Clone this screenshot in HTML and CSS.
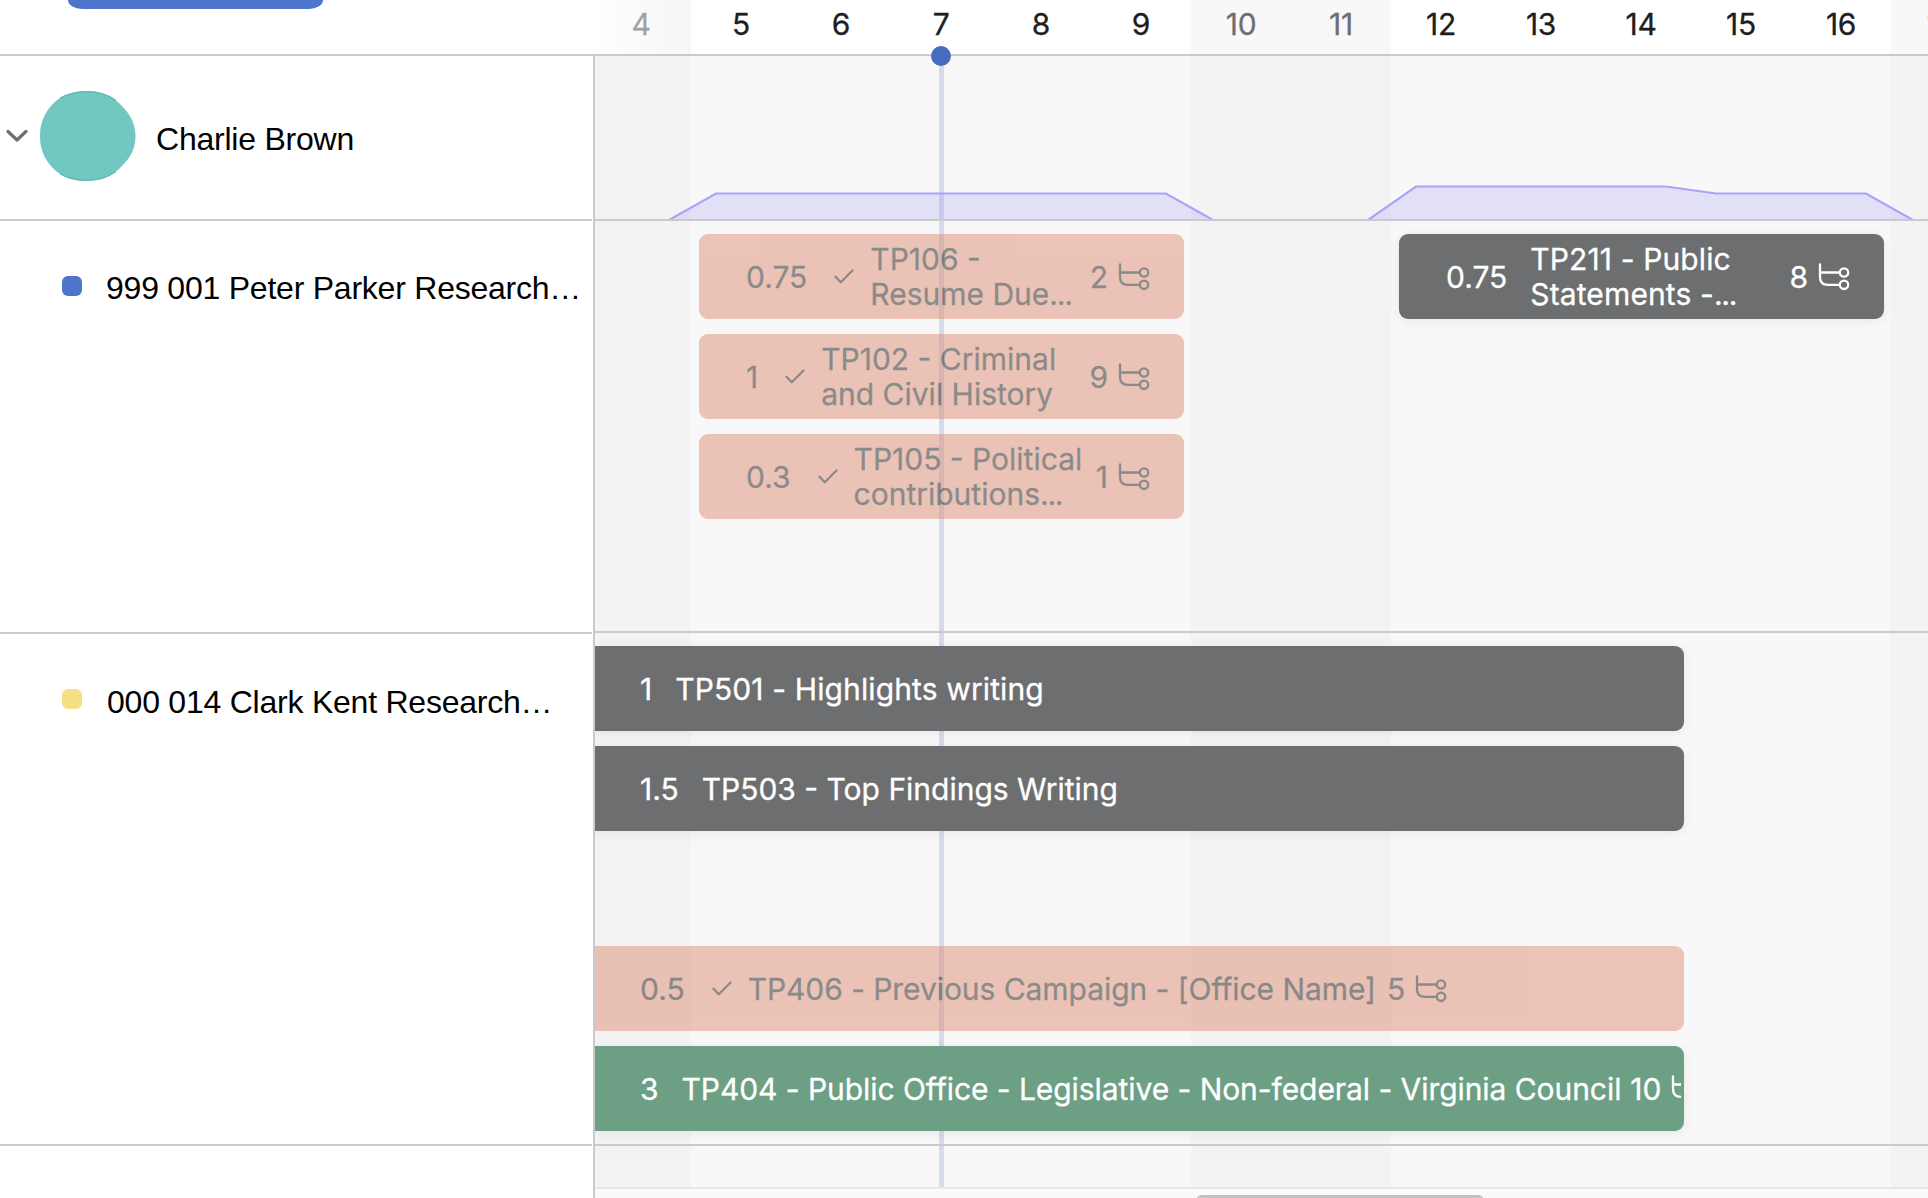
FILE: index.html
```html
<!DOCTYPE html>
<html lang="en">
<head>
<meta charset="utf-8">
<title>Workload timeline</title>
<link rel="stylesheet" href="styles.css">
</head>
<body>
<svg class="defs" aria-hidden="true">
  <symbol id="check" viewBox="0 0 20 15"><path d="M1.5 7.8 L6.8 13.2 L18.5 1.5" fill="none" stroke="currentColor" stroke-width="2.3" stroke-linecap="round" stroke-linejoin="round"/></symbol>
  <symbol id="subtasks" viewBox="0 0 32 28"><g fill="none" stroke="currentColor" stroke-width="2.3" stroke-linecap="round"><path d="M2 1.3 V14 Q2 21.8 9.8 21.8 H21.2 M2 9.5 H21.2"/><circle cx="26" cy="9.5" r="4.2"/><circle cx="26" cy="21.8" r="4.2"/></g></symbol>
</svg>
<div class="page">
  <header class="header">
    <div class="toolbar"><button class="button" aria-label="Add work"></button></div>
    <div class="days">
      <span class="day weekend first">4</span><span class="day">5</span><span class="day">6</span><span class="day">7</span><span class="day">8</span><span class="day">9</span><span class="day weekend">10</span><span class="day weekend">11</span><span class="day">12</span><span class="day">13</span><span class="day">14</span><span class="day">15</span><span class="day">16</span><span class="day weekend">17</span>
    </div>
  </header>
  <main class="body">
    <aside class="sidebar">
      <div class="person">
        <svg class="chevron" viewBox="0 0 22 14"><path d="M2 2.5 L11 11 L20 2.5" fill="none" stroke="#6d6e6f" stroke-width="3.2" stroke-linecap="round" stroke-linejoin="round"/></svg>
        <svg class="avatar" viewBox="0 0 96 90"><path d="M47 0 C61 0 73 5 82 15 C91 24 95.500 34 95.500 45 C95.500 57 91 66 82 75 C73 85 61 90 47 90 C32 90 19 85 10 74 C3 65 0 56 0 45 C0 34 3 25 10 16 C19 5 32 0 47 0Z" fill="#71c7c1"/><path d="M20 7.500 C28 2.500 37 .8 47 .8 C58 .8 68 4 76 9.500 M20 82.500 C28 87.500 37 89.200 47 89.200 C58 89.200 68 86 76 80.500" fill="none" stroke="#68b9b4" stroke-width="1.500"/></svg>
        <span class="name">Charlie Brown</span>
      </div>
      <div class="project first-project"><i class="swatch blue"></i><span class="peter">999 001 Peter Parker Research…</span></div>
      <div class="project second-project"><i class="swatch yellow"></i><span class="clark">000 014 Clark Kent Research…</span></div>
    </aside>
    <section class="timeline">
      <div class="today"></div>
      <div class="row load">
        <svg class="chart" viewBox="595 56 1333 163">
          <g fill="#8a82f5" fill-opacity=".2" stroke="#a9a3f9" stroke-width="2.2">
            <path d="M669 220 L716 193.500 H1166 L1213 220"/>
            <path d="M1368 220 L1416 186.500 H1666 L1716 193.500 H1866 L1913 220"/>
          </g>
        </svg>
      </div>
      <div class="row lanes peter-row">
        <div class="lane">
          <article class="card short done"><span class="hours">0.75</span><svg class="check"><use href="#check"/></svg><span class="title">TP106 -<br>Resume Due<span class="dots">...</span></span><span class="badge">2<svg class="sub"><use href="#subtasks"/></svg></span></article>
          <article class="card short dark later"><span class="hours">0.75</span><span class="title spaced">TP211 - Public<br>Statements -<span class="dots">...</span></span><span class="badge">8<svg class="sub"><use href="#subtasks"/></svg></span></article>
        </div>
        <div class="lane">
          <article class="card short done"><span class="hours">1</span><svg class="check"><use href="#check"/></svg><span class="title">TP102 - Criminal<br>and Civil History</span><span class="badge">9<svg class="sub"><use href="#subtasks"/></svg></span></article>
        </div>
        <div class="lane">
          <article class="card short done"><span class="hours">0.3</span><svg class="check"><use href="#check"/></svg><span class="title">TP105 - Political<br>contributions<span class="dots">...</span></span><span class="badge">1<svg class="sub"><use href="#subtasks"/></svg></span></article>
        </div>
      </div>
      <div class="row lanes clark-row">
        <div class="lane"><article class="card long dark"><span class="hours">1</span><span class="title line spaced">TP501 - Highlights writing</span></article></div>
        <div class="lane"><article class="card long dark"><span class="hours">1.5</span><span class="title line">TP503 - Top Findings Writing</span></article></div>
        <div class="lane"></div>
        <div class="lane"><article class="card long done"><span class="hours">0.5</span><svg class="check"><use href="#check"/></svg><span class="title line tight">TP406 - Previous Campaign - [Office Name]</span><span class="badge">5<svg class="sub"><use href="#subtasks"/></svg></span></article></div>
        <div class="lane"><article class="card long green"><div class="clip"><span class="hours">3</span><span class="title line tight">TP404 - Public Office - Legislative - Non-federal - Virginia Council</span><span class="badge">10<svg class="sub"><use href="#subtasks"/></svg></span></div></article></div>
      </div>
      <div class="row rest"></div>
      <div class="scrollbar"><div class="thumb"></div></div>
    </section>
  </main>
</div>
</body>
</html>
```
FILE: styles.css
```css
* { box-sizing: border-box; }
body { margin: 0; background: #fff; font-family: Inter, "Liberation Sans", sans-serif; font-size: 30px; color: #1e1e1e; -webkit-text-stroke: .3px currentColor; }
.defs { position: absolute; width: 0; height: 0; }
.page { width: 1928px; height: 1198px; overflow: hidden; display: flex; flex-direction: column; }

.header { height: 56px; flex: none; display: flex; border-bottom: 2px solid #cbcaca; }
.toolbar { width: 591px; flex: none; padding-left: 68px; }
.button { display: block; width: 255px; height: 9px; padding: 0; border: 0; border-radius: 0 0 14px 14px / 0 0 9px 9px; background: #4e74cc; }
.days { display: flex; overflow: hidden; flex: 1; }
.day { width: 100px; flex: none; text-align: center; line-height: 49px; letter-spacing: -.3px; }
.weekend { background: #f8f8f8; color: #6d6e6f; }
.day.first { color: #a2a2a2; background: linear-gradient(to right, #fff, #f7f7f7 85%); }

.body { flex: 1; display: flex; min-height: 0; }
.sidebar { width: 595px; flex: none; border-right: 2px solid #cbcaca; padding-right: 1px; font-family: "Liberation Sans", Arial, sans-serif; font-size: 32px; letter-spacing: -.23px; color: #000; white-space: nowrap; -webkit-text-stroke: 0; }
.person { height: 165px; border-bottom: 2px solid #cbcaca; display: flex; align-items: flex-start; padding-left: 6px; }
.chevron { width: 22px; height: 14px; margin-top: 73px; }
.avatar { width: 96px; height: 90px; margin: 35px 0 0 12px; }
.name { margin: 65px 0 0 20px; line-height: 37px; }
.project { display: flex; align-items: flex-start; padding: 48px 0 0 62px; border-bottom: 2px solid #cbcaca; line-height: 37px; }
.first-project { height: 413px; }
.second-project { height: 512px; }
.swatch { width: 20px; height: 20px; border-radius: 6px; margin: 7px 23px 0 0; flex: none; }
.blue { background: #4e74cc; }
.yellow { background: #f4df82; }
.peter { padding: 1px 0 0 1px; }
.clark { padding: 2px 0 0 2px; }

.timeline { position: relative; flex: 1; min-width: 0; overflow: hidden; display: flex; flex-direction: column; background: linear-gradient(to right, #f4f2f3 96px, #f8f8f8 96px 596px, #f4f2f3 596px 796px, #f8f8f8 796px 1296px, #f4f2f3 1296px); }
.today { position: absolute; left: 344px; top: 0; width: 5px; height: 1131px; background: #d5dbed; }
.header::after { content: ""; position: absolute; left: 931px; top: 46px; width: 20px; height: 20px; border-radius: 50%; background: #466bbf; z-index: 3; }
.row { position: relative; flex: none; border-bottom: 2px solid #cbcaca; }
.load { height: 165px; }
.chart { display: block; width: 1333px; height: 163px; }
.lanes { display: flex; flex-direction: column; gap: 15px; padding-top: 13px; }
.peter-row { height: 412px; }
.clark-row { height: 513px; }
.rest { height: 43px; border-color: #e8e8e8; }
.lane { height: 85px; flex: none; display: flex; }
.scrollbar { flex: 1; background: #fafafa; padding: 6px 0 0 601px; }
.thumb { width: 288px; height: 12px; border-radius: 7px; background: #c1c1c1; }

.card { height: 85px; flex: none; display: flex; align-items: center; line-height: 35px; white-space: nowrap; border-radius: 9px; }
.card > *, .clip > * { flex: none; }
.short { width: 485px; margin-left: 104px; padding: 0 34px 0 47px; }
.later { margin-left: 215px; }
.long { width: 1089px; padding-left: 45px; border-radius: 0 9px 9px 0; }
.done { background: #de9076; opacity: .5; }
.dark, .green { color: #fff; box-shadow: 0 2px 12px rgba(0, 0, 0, .07); }
.dark { background: #6d6e6f; }
.green { background: #6c9f84; }
.clip { display: flex; align-items: center; width: 1041px; overflow: hidden; }
.hours { margin-right: 23px; padding-top: 2px; }
.done .hours { margin-right: 27px; }
.check { width: 20px; height: 15px; margin-right: 16px; }
.line { padding-top: 2px; }
.spaced { letter-spacing: .12px; }
.tight { letter-spacing: -.06px; }
.dots { letter-spacing: -1.2px; }
.badge { display: flex; align-items: center; margin-left: 11px; padding-top: 2px; }
.green .badge { margin-left: 9px; }
.short .badge { margin-left: auto; }
.sub { width: 32px; height: 28px; margin: -2px 0 0 10px; }
```
